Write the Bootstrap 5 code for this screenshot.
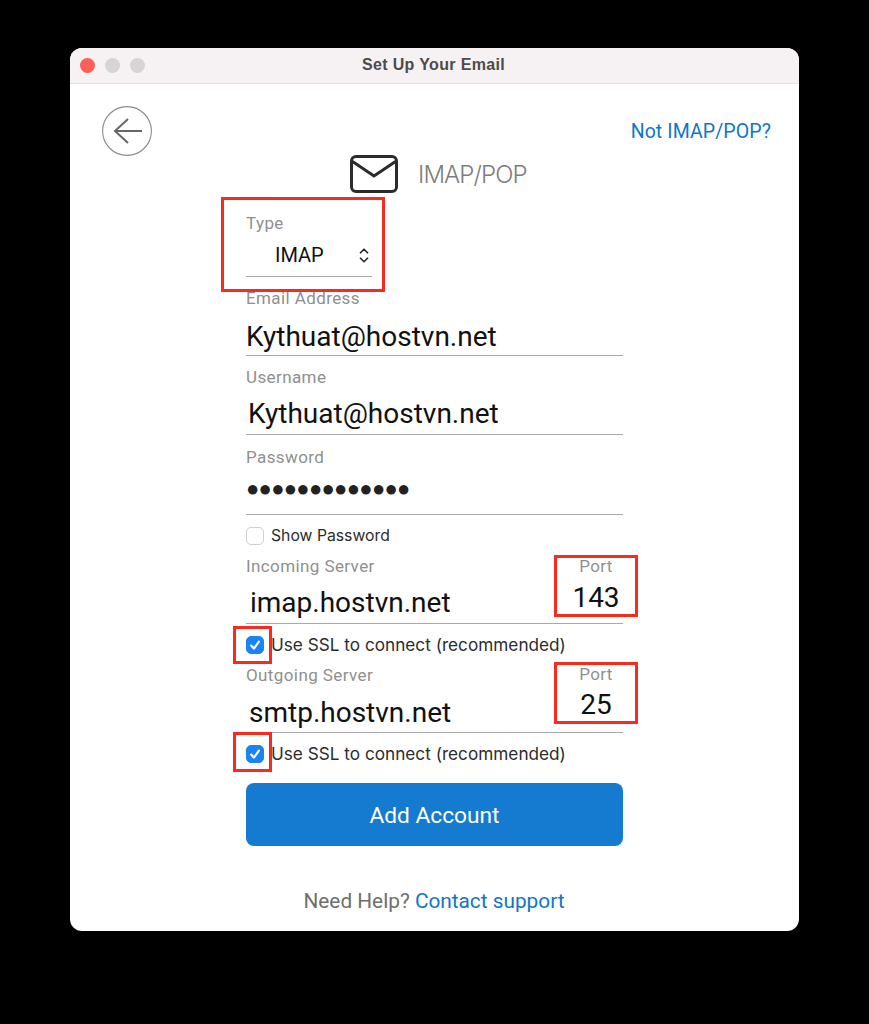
<!DOCTYPE html>
<html lang="en">
<head>
<meta charset="utf-8">
<title>Set Up Your Email</title>
<link href="https://cdn.jsdelivr.net/npm/bootstrap@5.3.0/dist/css/bootstrap.min.css" rel="stylesheet">
<style>
html,body{background:#000;height:1024px;overflow:hidden}
body{font-family:Inter,"Liberation Sans",sans-serif;padding:48px 70px 0}
.mac-win{width:729px;height:883px;background:#fff;border-radius:12px;overflow:hidden}
.mac-bar{height:36px;background:#f6f1f2;border-bottom:1px solid #e4e0e1;padding-left:10px;gap:10px}
.mac-dot{width:15px;height:15px;border-radius:50%;background:#d8d4d5}
.mac-red{background:#fd5f5a}
.mac-title{left:-2px;right:0;top:0;height:35px;line-height:33px;font-size:16px;font-weight:700;color:#4d4b4c;font-family:"Liberation Sans",sans-serif;letter-spacing:.35px}
.top-row{padding:22px 28px 0 32px;height:71px}
.back-btn{width:50px;height:50px}
.not-link{color:#0f76c9;font-size:19.5px;text-decoration:none;margin-top:11px;font-family:Roboto,sans-serif;letter-spacing:.1px}
.head-row{height:38px;padding-left:280px;gap:20px}
.head-txt{font-size:24px;color:#7d7d7d;letter-spacing:-.9px;font-weight:300;margin-top:2px}
.form-col{width:377px;margin-left:176px;margin-top:21px}
.lbl{font-size:17px;line-height:18px;padding-bottom:2px;color:#8f8f8f;font-family:Roboto,sans-serif;letter-spacing:.4px}
.fld{border-bottom:1px solid #a9a9a9;font-family:Roboto,sans-serif;color:#111;font-size:28px;line-height:34px}
.fld-type{width:126px;height:43px;font-size:20px;padding:0 3px 0 29px}
.fld-email{height:47px;padding-top:11px;margin-bottom:12px}
.fld-user{height:47px;padding:9px 0 0 2px;margin-bottom:13px}
.fld-pass{height:47px;padding-top:4px;margin-bottom:11px;letter-spacing:-.7px;font-size:22px;color:#222}
.fld-in{height:47px;padding:9px 0 0 4px;margin-bottom:11px}
.fld-out{height:47px;padding:10px 0 0 3px;margin-bottom:11px}
.mt-a{margin-top:12px}
.chk-row{height:20px;gap:7px;font-size:15.75px;line-height:20px;color:#2c2c2c;font-family:Inter,sans-serif}
.chk-ssl{font-size:17.2px}
.chk-row .form-check-input{width:18px;height:18px;margin:0;border-radius:5px;flex:none;border-color:#cfcfcf}
.chk-row .form-check-input:checked{background-color:#1a84f5;border-color:#1a84f5;background-size:100% 100%;background-image:url("data:image/svg+xml,%3csvg xmlns='http://www.w3.org/2000/svg' viewBox='0 0 18 18'%3e%3cpath fill='none' stroke='%23fff' stroke-width='2.4' stroke-linecap='round' stroke-linejoin='round' d='M4.6 9.6 7.8 13 13.4 5.2'/%3e%3c/svg%3e")}
.gap-b{margin-bottom:11px}
.red-box{border:3px solid #fa2a1e;pointer-events:none}
.rb-type{left:-25px;top:-17px;width:164px;height:95px}
.rb-port{right:-15px;top:-2px;width:84px;height:62px;text-align:center}
.rb-port2{top:-4px}
.rb-chk{left:-13px;top:-9px;width:39px;height:38px}
.rb-chk2{top:-12px;height:40px}
.port-lbl{font-size:17px;line-height:20px;color:#8f8f8f;margin-top:-2px;font-family:Roboto,sans-serif;letter-spacing:.4px}
.port-val{font-size:28px;line-height:34px;color:#111;font-family:Roboto,sans-serif;margin-top:5px}
.rb-port2 .port-lbl{margin-top:-1px}
.rb-port2 .port-val{margin-top:4px}
.add-btn{width:377px;height:63px;margin-top:19px;padding:4px 0 0;background:#147bd1;border:0;border-radius:8px;font-size:22.7px;color:#fff;font-family:Roboto,sans-serif}
.add-btn:hover{background:#147bd1;color:#fff}
.help-row{margin-top:43px;padding-right:1px;font-size:20.8px;line-height:24px;color:#6f6f6f;font-family:Roboto,sans-serif}
.help-row a{color:#0f76c9;text-decoration:none}
</style>
</head>
<body>
<div class="mac-win">
  <div class="mac-bar d-flex align-items-center position-relative">
    <span class="mac-dot mac-red"></span><span class="mac-dot"></span><span class="mac-dot"></span>
    <div class="mac-title position-absolute text-center">Set Up Your Email</div>
  </div>
  <div class="top-row d-flex justify-content-between align-items-start">
    <svg class="back-btn" viewBox="0 0 50 50" fill="none" aria-label="Back"><circle cx="25" cy="25" r="24.4" stroke="#8a8a8a" stroke-width="1.1"/><path d="M40 25H13M26 13 13 25l13 12" stroke="#666" stroke-width="2"/></svg>
    <a class="not-link" href="#">Not IMAP/POP?</a>
  </div>
  <div class="head-row d-flex align-items-center">
    <svg width="48" height="38" viewBox="0 0 48 38" fill="none" aria-hidden="true"><rect x="1.5" y="1.5" width="45" height="35" rx="4.5" stroke="#2b2b2b" stroke-width="3"/><path d="M2.5 6.5 24 21 45.5 6.5" stroke="#2b2b2b" stroke-width="3"/></svg>
    <span class="head-txt">IMAP/POP</span>
  </div>
  <div class="form-col">
    <div class="position-relative mb-0">
      <div class="lbl">Type</div>
      <div class="fld fld-type d-flex justify-content-between align-items-center">IMAP
        <svg width="10" height="15" viewBox="0 0 10 15" fill="none" aria-hidden="true"><path d="M1 5.2 5 1.3l4 3.9M1 9.8l4 3.9 4-3.9" stroke="#222" stroke-width="1.6"/></svg>
      </div>
      <div class="red-box rb-type position-absolute"></div>
    </div>
    <div class="lbl mt-a">Email Address</div>
    <div class="fld fld-email">Kythuat@hostvn.net</div>
    <div class="lbl">Username</div>
    <div class="fld fld-user">Kythuat@hostvn.net</div>
    <div class="lbl">Password</div>
    <div class="fld fld-pass">●●●●●●●●●●●●●</div>
    <label class="chk-row d-flex align-items-center gap-b"><input class="form-check-input" type="checkbox">Show Password</label>
    <div class="position-relative">
      <div class="lbl">Incoming Server</div>
      <div class="fld fld-in">imap.hostvn.net</div>
      <div class="red-box rb-port position-absolute"><div class="port-lbl">Port</div><div class="port-val">143</div></div>
    </div>
    <label class="chk-row chk-ssl d-flex align-items-center gap-b position-relative"><input class="form-check-input" type="checkbox" checked>Use SSL to connect (recommended)<span class="red-box rb-chk position-absolute"></span></label>
    <div class="position-relative">
      <div class="lbl">Outgoing Server</div>
      <div class="fld fld-out">smtp.hostvn.net</div>
      <div class="red-box rb-port rb-port2 position-absolute"><div class="port-lbl">Port</div><div class="port-val">25</div></div>
    </div>
    <label class="chk-row chk-ssl d-flex align-items-center position-relative"><input class="form-check-input" type="checkbox" checked>Use SSL to connect (recommended)<span class="red-box rb-chk rb-chk2 position-absolute"></span></label>
    <button class="btn add-btn d-block" type="button">Add Account</button>
  </div>
  <div class="help-row text-center">Need Help? <a href="#">Contact support</a></div>
</div>
<script src="https://cdn.jsdelivr.net/npm/bootstrap@5.3.0/dist/js/bootstrap.bundle.min.js"></script>
</body>
</html>
